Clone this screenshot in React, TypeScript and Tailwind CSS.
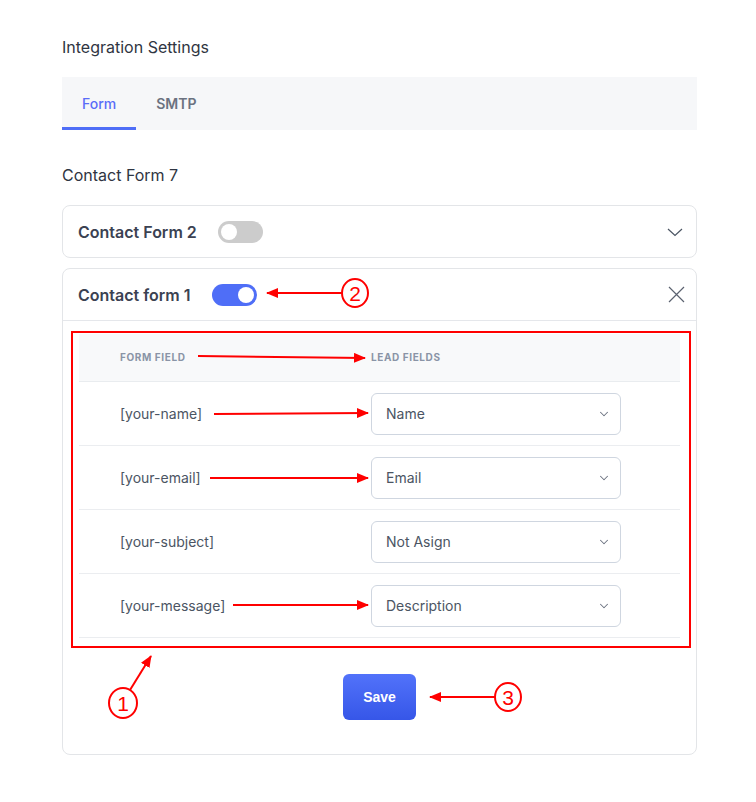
import { ChevronDown } from "lucide-react";

const rows = [
  { field: "[your-name]", lead: "Name" },
  { field: "[your-email]", lead: "Email" },
  { field: "[your-subject]", lead: "Not Asign" },
  { field: "[your-message]", lead: "Description" },
];

function Toggle({ on }: { on: boolean }) {
  return (
    <div
      className={
        on
          ? "ml-[21px] w-[45px] h-[22px] rounded-full bg-[#4f6ef7] flex items-center justify-end pr-[3px]"
          : "ml-[21px] w-[45px] h-[22px] rounded-full bg-[#cccccc] flex items-center justify-start pl-[3px]"
      }
    >
      <div className="w-[16px] h-[16px] rounded-full bg-white" />
    </div>
  );
}

function Annotations() {
  const red = "#ff0000";
  return (
    <svg
      className="absolute left-0 top-0 pointer-events-none"
      width={756}
      height={802}
      viewBox="0 0 756 802"
    >
      <defs>
        <marker
          id="ah"
          markerUnits="userSpaceOnUse"
          markerWidth="12"
          markerHeight="10"
          refX="11"
          refY="5"
          orient="auto"
        >
          <path d="M0 0 L12 5 L0 10 Z" fill={red} />
        </marker>
      </defs>
      {/* highlight box */}
      <rect x="72" y="332" width="618" height="315" fill="none" stroke={red} strokeWidth="2" />

      {/* arrows */}
      <g stroke={red} strokeWidth="2" fill="none">
        <line x1="198" y1="356" x2="365" y2="358" markerEnd="url(#ah)" />
        <line x1="214" y1="414" x2="368" y2="413" markerEnd="url(#ah)" />
        <line x1="210" y1="478" x2="368" y2="478" markerEnd="url(#ah)" />
        <line x1="233" y1="605" x2="368" y2="605" markerEnd="url(#ah)" />
        <line x1="342" y1="293" x2="267" y2="293" markerEnd="url(#ah)" />
        <line x1="130" y1="690" x2="151" y2="656" markerEnd="url(#ah)" />
        <line x1="495" y1="697" x2="430" y2="697" markerEnd="url(#ah)" />
      </g>

      {/* numbered circles */}
      <g stroke={red} strokeWidth="2" fill="white">
        <ellipse cx="355" cy="293" rx="13" ry="14" />
        <ellipse cx="123" cy="703" rx="14" ry="15" />
        <ellipse cx="508" cy="697" rx="13" ry="14" />
      </g>
      <g fill={red} fontFamily="'Liberation Sans', Arial, sans-serif" fontSize="21" textAnchor="middle">
        <text x="355" y="301">2</text>
        <text x="123" y="711">1</text>
        <text x="508" y="705">3</text>
      </g>
    </svg>
  );
}

export default function App() {
  return (
    <div className="relative w-[756px] min-h-[802px] bg-white font-['Inter',sans-serif]">
      <div className="pl-[62px] pt-[36px] w-[697px]">
        {/* Header */}
        <h2 className="text-[16px] leading-[22px] text-[#2f3542]">Integration Settings</h2>

        {/* Tabs */}
        <div className="mt-[19px] h-[53px] bg-[#f6f7f9] flex">
          <div className="px-5 h-full flex items-center border-b-[3px] border-[#4f6ef7] pt-[3px]">
            <span className="text-[14px] font-medium text-[#5a6cf8]">Form</span>
          </div>
          <div className="px-5 h-full flex items-center">
            <span className="text-[14px] font-semibold text-[#6b7280]">SMTP</span>
          </div>
        </div>

        <h3 className="mt-[34px] text-[16px] leading-[22px] text-[#2f3542]">Contact Form 7</h3>

        {/* Collapsed card */}
        <div className="mt-[19px] h-[53px] border border-[#e3e5e8] rounded-[8px] flex items-center pl-[15px] pr-[13px]">
          <span className="text-[16px] font-semibold text-[#3b4252]">Contact Form 2</span>
          <Toggle on={false} />
          <svg className="ml-auto" width="16" height="10" viewBox="0 0 16 10" fill="none">
            <path d="M1 2 L8 8.5 L15 2" stroke="#4b5563" strokeWidth="1.2" />
          </svg>
        </div>

        {/* Expanded card */}
        <div className="mt-[10px] border border-[#e3e5e8] rounded-[8px]">
          <div className="h-[52px] flex items-center pl-[15px] pr-[11px] border-b border-[#e5e7eb]">
            <span className="text-[16px] font-semibold text-[#3b4252]">Contact form 1</span>
            <Toggle on={true} />
            <svg className="ml-auto" width="17" height="17" viewBox="0 0 17 17" fill="none">
              <path d="M1 1 L16 16 M16 1 L1 16" stroke="#5b6270" strokeWidth="1.2" />
            </svg>
          </div>

          <div className="px-[16px] pt-[13px] pb-[34px]">
            <div className="h-[48px] bg-[#f8f9fa] border-b border-[#e9ecef] flex items-center text-[10px] font-bold tracking-[0.06em] text-[#8a94a6]">
              <div className="w-[292px] pl-[41px]">FORM FIELD</div>
              <div>LEAD FIELDS</div>
            </div>
            {rows.map((r) => (
              <div key={r.field} className="h-[64px] border-b border-[#ebedf0] flex items-center">
                <div className="w-[292px] pl-[41px] text-[14px] text-[#4b5563]">{r.field}</div>
                <div className="w-[250px] h-[42px] border border-[#cfd6e0] rounded-[6px] flex items-center justify-between pl-[14px] pr-[9px] text-[14px] text-[#4b5563]">
                  <span>{r.lead}</span>
                  <ChevronDown className="w-[14px] h-[14px] text-[#6b7280]" strokeWidth={1.75} />
                </div>
              </div>
            ))}

            <div className="mt-[36px] flex justify-center">
              <button className="w-[73px] h-[46px] rounded-[6px] bg-gradient-to-b from-[#5272fa] to-[#3656e8] text-white text-[14px] font-bold font-['Liberation_Sans',Arial,sans-serif]">
                Save
              </button>
            </div>
          </div>
        </div>
      </div>
      <Annotations />
    </div>
  );
}
